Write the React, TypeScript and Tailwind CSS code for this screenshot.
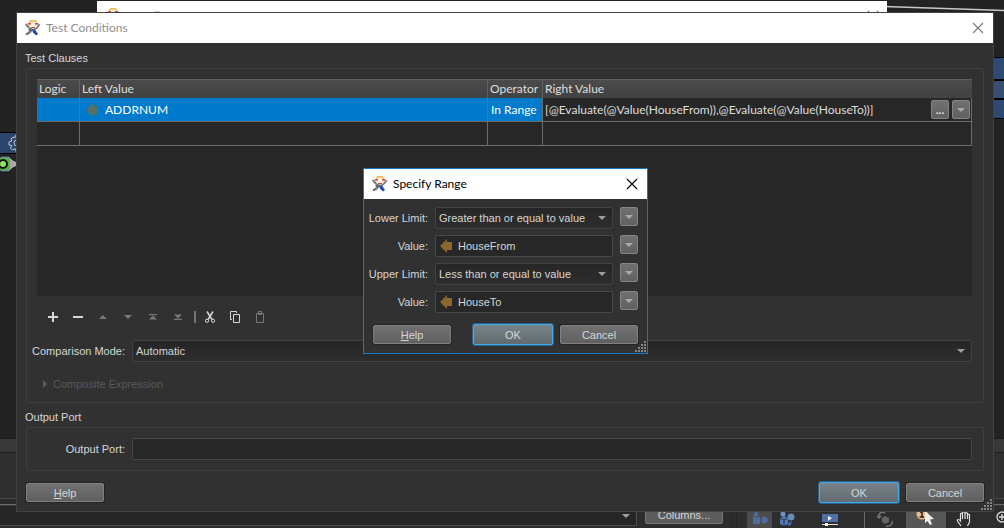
import type { ReactNode, SVGProps } from "react";

const tahoma = "font-['Liberation_Sans',Arial,sans-serif]";
const segoe = "font-[Lato,sans-serif]";

function Runner() {
  return (
    <svg className="size-4 shrink-0" viewBox="0 0 16 16" aria-hidden="true">
      <path d="M0 4L2 3.500L4.500 6L11 6L13.500 3.500L15.500 4.500L12.500 8.500L10 10.500L7.500 11L5 14L1 15.500L.500 13.500L3 12L5 9L2 7.500Z" fill="#94959a" />
      <path d="M.500 4.500L3 6.500L5.500 8M1 14.500L4.500 12M10.500 8.500L14.500 5.500" stroke="#55575d" fill="none" />
      <path d="M3 9L6 8L8 10L5 12Z" fill="#60636b" />
      <ellipse cx="8" cy="4.500" rx="4.800" ry="4" fill="#f8e3c8" />
      <path d="M4 2L6 .700H10L12 2" stroke="#efb53b" strokeWidth="1.200" fill="none" />
      <path d="M3 3.800H6M10 3.800H13" stroke="#d9432a" strokeWidth="1.500" />
      <path d="M6 3H10V7H6Z" fill="#fff6ef" />
      <path d="M6 7.500H10" stroke="#c9453a" />
      <path d="M7 9.500H10L13 14L11 15.500L8 12.500Z" fill="#1d4cae" />
    </svg>
  );
}

function Cross({ className }: { className: string }) {
  return (
    <svg className={`size-3 ${className}`} viewBox="0 0 12 12" fill="none" stroke="currentColor" aria-hidden="true">
      <path d="M1 1L11 11M11 1L1 11" strokeWidth="1.100" />
    </svg>
  );
}

function Down({ className }: { className: string }) {
  return (
    <svg className={`h-1 w-2 shrink-0 ${className}`} viewBox="0 0 8 4" fill="currentColor" aria-hidden="true">
      <path d="M0 0H8L4 4Z" />
    </svg>
  );
}

function LeftArrow({ className }: { className: string }) {
  return (
    <svg className={`h-[14px] w-3 shrink-0 ${className}`} viewBox="0 0 12 14" fill="currentColor" aria-hidden="true">
      <path d="M0 7L7 0V3H12V11H7V14Z" />
    </svg>
  );
}

function Grip() {
  const dots = [[9, 0], [6, 3], [9, 3], [3, 6], [6, 6], [9, 6], [0, 9], [3, 9], [6, 9], [9, 9]];
  return (
    <svg className="absolute right-px bottom-px h-[11px] w-[11px]" viewBox="0 0 11 11" fill="#858585" aria-hidden="true">
      {dots.map(([x, y]) => <rect key={`${x}-${y}`} x={x} y={y} width="2" height="2" />)}
    </svg>
  );
}

function PushButton({ children, primary }: { children: ReactNode; primary?: boolean }) {
  return (
    <button
      type="button"
      className={`flex items-center justify-center rounded-xs border bg-linear-to-b ${
        primary
          ? "h-[21px] w-20 border-[#43a9ed] from-[#78848a] to-[#626b6f] ring-1 ring-[#2a638b]"
          : "h-[19px] w-[78px] border-[#818181] from-[#717171] to-[#606060] ring-1 ring-[#242424]"
      }`}
    >
      {children}
    </button>
  );
}

function SmallButton({ label, children }: { label: string; children: ReactNode }) {
  return (
    <button
      type="button"
      aria-label={label}
      className="flex h-[19px] w-[18px] shrink-0 items-center justify-center rounded-xs border border-[#858585] bg-linear-to-b from-[#707070] to-[#616161]"
    >
      {children}
    </button>
  );
}

function Combo({ id, value }: { id: string; value: string }) {
  return (
    <div className="grid h-[22px] flex-1 items-center">
      <select
        id={id}
        className="col-start-1 row-start-1 h-[22px] w-full appearance-none rounded-xs border border-[#424242] bg-linear-to-b from-[#262626] to-[#2d2d2d] pl-[3px] outline-none"
      >
        <option>{value}</option>
      </select>
      <Down className="pointer-events-none col-start-1 row-start-1 mr-[7px] justify-self-end text-[#9b9b9b]" />
    </div>
  );
}

function TitleBar({ title, active }: { title: string; active?: boolean }) {
  return (
    <header className={`flex h-[30px] items-center bg-white pr-[9px] pl-2 text-xs ${segoe} ${active ? "text-black" : "text-[#8f8f8f]"}`}>
      <Runner />
      <h2 className="ml-[5px] flex-1">{title}</h2>
      <button type="button" aria-label={`Close ${title}`}><Cross className={active ? "text-black" : "text-[#777]"} /></button>
    </header>
  );
}

function Tool({ label, dim, children, ...rest }: { label: string; dim?: boolean; children: ReactNode } & SVGProps<SVGSVGElement>) {
  return (
    <button type="button" aria-label={label} disabled={dim} className={`flex h-5 w-[25px] items-center justify-center ${dim ? "text-[#777]" : "text-[#d6d6d6]"}`}>
      <svg className="size-3" viewBox="0 0 12 12" fill="none" stroke="currentColor" {...rest}>{children}</svg>
    </button>
  );
}

function Toolbar() {
  return (
    <div className="mt-[11px] ml-[3px] flex items-center">
      <Tool label="Add"><path d="M1 6H11M6 1V11" strokeWidth="2" /></Tool>
      <Tool label="Remove"><path d="M1 6H11" strokeWidth="2" /></Tool>
      <Tool label="Move up" dim><path d="M2 8L6 4L10 8Z" fill="currentColor" stroke="none" /></Tool>
      <Tool label="Move down" dim><path d="M2 4H10L6 8Z" fill="currentColor" stroke="none" /></Tool>
      <Tool label="Move to top" dim><path d="M2 3H10V4.200H2ZM6 4.500L10 8.500H2Z" fill="currentColor" stroke="none" /></Tool>
      <Tool label="Move to bottom" dim><path d="M2 7.800H10V9H2ZM2 3.500H10L6 7.500Z" fill="currentColor" stroke="none" /></Tool>
      <span className="mr-px ml-1 h-3 w-[2px] bg-[#737373]" />
      <Tool label="Cut">
        <path d="M3 .500L8 8.500M9 .500L4 8.500" strokeWidth="1.500" /><circle cx="3" cy="9.800" r="1.600" /><circle cx="9" cy="9.800" r="1.600" />
      </Tool>
      <Tool label="Copy"><path d="M4.500 3.500H10.500V11.500H4.500ZM3 8.500H1.500V.500H7.500V2" /></Tool>
      <Tool label="Paste" dim><path d="M2.500 2.500H9.500V11.500H2.500ZM4.500 3.500V.500H7.500V3.500Z" /></Tool>
    </div>
  );
}

const cell = "border-r border-b border-[#6b6b6b] p-0";
const head = "border-r border-[#606060] p-0 pl-[2px] font-normal";

function ClauseTable() {
  return (
    <div className="h-[217px] border-t border-[#606060] bg-[#272727]">
      <table className={`w-full table-fixed border-separate border-spacing-0 text-xs leading-4 text-[#dedede] ${segoe}`}>
        <colgroup><col className="w-[43px]" /><col /><col className="w-[55px]" /><col className="w-[429px]" /></colgroup>
        <thead>
          <tr className="h-[18px] bg-linear-to-b from-[#4b4b4b] to-[#424242] text-left">
            <th className={head}>Logic</th>
            <th className={head}>Left Value</th>
            <th className={head}>Operator</th>
            <th className="p-0 pl-[2px] font-normal">Right Value</th>
          </tr>
        </thead>
        <tbody>
          <tr className="h-6">
            <td className={`${cell} bg-[#007acc]`} />
            <td className={`${cell} bg-[#007acc] text-white`}>
              <span className="flex items-center gap-[7px] pl-[6px]"><LeftArrow className="text-[#58705f]" />ADDRNUM</span>
            </td>
            <td className={`${cell} bg-[#007acc] text-white`}><span className="pl-[3px] whitespace-nowrap">In Range</span></td>
            <td className={cell}>
              <span className="flex items-center pl-[2px]">
                <span className="flex-1 whitespace-nowrap">[@Evaluate(@Value(HouseFrom)),@Evaluate(@Value(HouseTo))]</span>
                <span className="flex gap-[3px] pr-[1px]">
                  <SmallButton label="Edit value"><span className="leading-3 font-bold">...</span></SmallButton>
                  <SmallButton label="Value options"><Down className="text-[#aaa]" /></SmallButton>
                </span>
              </span>
            </td>
          </tr>
          <tr className="h-6"><td className={cell} /><td className={cell} /><td className={cell} /><td className={cell} /></tr>
        </tbody>
      </table>
    </div>
  );
}

function TestConditions() {
  return (
    <section className="absolute top-3 right-[10px] left-4 border border-[#424242] bg-[#313131]">
      <TitleBar title="Test Conditions" />
      <div className="px-[9px] pt-[7px] pb-2">
        <h3 className="-ml-px h-[18px] leading-4">Test Clauses</h3>
        <div className="h-[335px] rounded-xs border border-[#3e3e3e] pt-[10px] pr-[11px] pl-[10px]">
          <ClauseTable />
          <Toolbar />
          <div className="mt-[13px] flex items-center">
            <label htmlFor="mode" className="flex w-[95px] justify-end pr-[7px] whitespace-nowrap">Comparison Mode:</label>
            <Combo id="mode" value="Automatic" />
          </div>
          <button type="button" disabled className="mt-[14px] ml-[6px] flex items-center gap-[6px] text-[#5a5a5a]">
            <svg className="h-2 w-1" viewBox="0 0 4 8" fill="currentColor" aria-hidden="true"><path d="M0 0L4 4L0 8Z" /></svg>
            Composite Expression
          </button>
        </div>
        <h3 className="mt-[6px] -ml-px h-[18px] leading-4">Output Port</h3>
        <div className="flex h-11 items-center rounded-xs border border-[#3e3e3e] pr-[11px] pl-[10px]">
          <label htmlFor="port" className="flex w-[95px] justify-end pr-[7px] whitespace-nowrap">Output Port:</label>
          <input id="port" className="h-[22px] min-w-0 flex-1 rounded-xs border border-[#484848] bg-[#272727] px-1 outline-none" />
        </div>
        <footer className="mt-[11px] flex items-center">
          <PushButton><span><u>H</u>elp</span></PushButton>
          <span className="flex-1" />
          <div className="flex items-center gap-[7px]"><PushButton primary>OK</PushButton><PushButton>Cancel</PushButton></div>
        </footer>
      </div>
      <Grip />
    </section>
  );
}

function ValueField({ id, value }: { id: string; value: string }) {
  return (
    <div className="flex h-[22px] flex-1 items-center gap-[6px] rounded-xs border border-[#484848] bg-[#272727] pl-1">
      <LeftArrow className="text-[#8a672e]" />
      <input id={id} defaultValue={value} className="w-0 flex-1 bg-transparent outline-none" />
    </div>
  );
}

const limits = [
  { id: "lower", label: "Lower Limit:", value: "Greater than or equal to value", combo: true },
  { id: "lower-value", label: "Value:", value: "HouseFrom", combo: false },
  { id: "upper", label: "Upper Limit:", value: "Less than or equal to value", combo: true },
  { id: "upper-value", label: "Value:", value: "HouseTo", combo: false },
];

function SpecifyRange() {
  return (
    <section className="absolute top-[168px] left-[363px] w-[285px] border border-[#1479c9] bg-[#313131]">
      <TitleBar title="Specify Range" active />
      <div className="px-[9px] pt-2 pb-2">
        <div className="flex flex-col gap-[6px]">
          {limits.map(({ id, label, value, combo }) => (
            <div key={id} className="flex items-start">
              <label htmlFor={id} className="flex w-[62px] justify-end self-center pr-[7px] whitespace-nowrap">{label}</label>
              {combo ? <Combo id={id} value={value} /> : <ValueField id={id} value={value} />}
              <span className="w-[7px]" />
              <SmallButton label={`${label} options`}><Down className="text-[#aaa]" /></SmallButton>
            </div>
          ))}
        </div>
        <footer className="mt-[11px] flex items-center">
          <PushButton><span><u>H</u>elp</span></PushButton>
          <span className="flex-1" />
          <div className="flex items-center gap-[7px]"><PushButton primary>OK</PushButton><PushButton>Cancel</PushButton></div>
        </footer>
      </div>
      <Grip />
    </section>
  );
}

function Canvas() {
  return (
    <div className="relative h-[438px] overflow-hidden">
      <svg className="absolute top-0 right-0 h-3 w-[120px]" viewBox="0 0 120 12" fill="none" stroke="#c8c8c8" aria-hidden="true">
        <path d="M0 6.500L120 10.500" strokeWidth="1.300" />
      </svg>
      <div className="absolute top-px right-[117px] left-[97px] h-10 bg-white px-2 pt-[7px]">
        <div className={`flex items-center text-xs leading-4 text-[#999] ${segoe}`}>
          <Runner />
          <h2 className="ml-[5px] flex-1">TestFilter Parameters</h2>
          <Cross className="text-[#777]" />
        </div>
      </div>
      <div className="absolute top-[132px] left-0 h-[22px] w-5 border-y border-black bg-[#2c456b]">
        <svg className="absolute top-0 left-2 size-5" viewBox="0 0 20 20" fill="none" stroke="#b9c4d6" aria-hidden="true">
          <circle cx="9" cy="10" r="3" />
          <path d="M7.500 2.500H10.500L11 5L13 4L15 6L14 8L17 9V12L14 12.500L15 15L13 17L11 15.500L10.500 18H7.500L7 15.500L4.500 17L2.500 15L4 12.500L1 12V9L4 8L3 6L5 4L7 5Z" />
        </svg>
      </div>
      <svg className="absolute top-[155px] left-0 h-[18px] w-4" viewBox="0 0 16 18" aria-hidden="true">
        <path d="M0 1H9L13 5V13L9 17H0Z" fill="#7288a8" stroke="#111" />
        <path d="M0 3H8L10 5.500V12.500L8 15H0Z" fill="#55b82e" />
        <circle cx="3" cy="9" r="4" fill="#8ee26a" stroke="#111" strokeWidth="2" />
        <path d="M10 4L16 7V11L10 14Z" fill="#a9a9a9" />
      </svg>
      <div className="absolute top-[57px] right-0 flex w-[10px] flex-col gap-[2px] border-y border-black bg-black">
        <span className="h-[21px] bg-[#2e4a75]" /><span className="h-[17px] bg-[#384e72]" /><span className="h-[18px] bg-[#2f4a72]" />
      </div>
    </div>
  );
}

function StatusTools() {
  return (
    <div className="flex h-[23px] items-start overflow-hidden border-t border-[#3a3a3a] bg-[#2d2d2d]">
      <div className="flex h-5 flex-1 items-center justify-end rounded-xs border-r border-b border-[#505050] bg-[#262626] pr-[6px]">
        <Down className="text-[#a0a0a0]" />
      </div>
      <button type="button" className="ml-2 flex h-[18px] w-[78px] items-center justify-center rounded-xs border border-[#777] bg-[#5d5d5d]">Columns...</button>
      <span className="mr-[10px] ml-2 h-6 w-[6px] border-x border-[#242424]" />
      <button type="button" aria-label="Shapes" className="flex h-6 w-[25px] justify-center bg-[#4c4c4c]">
        <svg className="mt-1 h-4 w-4" viewBox="0 0 16 16" fill="#4d6da0"><path d="M4 0L7 6H1ZM1 7H8V14H1Z" /><circle cx="12.500" cy="10" r="3.200" /></svg>
      </button>
      <button type="button" aria-label="Objects" className="ml-[7px] h-6 w-5">
        <svg className="mt-1 h-4 w-4" viewBox="0 0 16 16"><path d="M1 6L5 4L9 6V12L5 14L1 12Z" fill="#527bb6" /><path d="M1 6L5 8L9 6M5 8V14" stroke="#24364f" fill="none" /><circle cx="4" cy="2" r="2.500" fill="#6f92c3" /><circle cx="12" cy="5" r="3.500" fill="#688abb" /><path d="M9 11L13 9L12 13L9 14Z" fill="#3d67a3" /></svg>
      </button>
      <button type="button" aria-label="Play" className="ml-[23px] h-6 w-4">
        <svg className="mt-[7px] h-4 w-4" viewBox="0 0 16 16"><path d="M0 0H16V8H0Z" fill="#4e70a8" /><path d="M6 2L10 4L6 7Z" fill="#eee" /><path d="M0 10.500H16" stroke="#ddd" /><path d="M3 9H6V12H3Z" fill="#eee" /></svg>
      </button>
      <span className="ml-[26px] h-6 w-px bg-[#686868]" />
      <button type="button" aria-label="Orbit" className="ml-3 h-6 w-[18px]">
        <svg className="mt-1 size-4" viewBox="0 0 16 16" fill="none" stroke="#777" strokeWidth="1.500"><path d="M5 6L8 4L12 6V10L8 12L5 10Z" fill="#646464" stroke="none" /><path d="M8 1C4-1 1 2 2 5M0 4L2 6L4 4M9 14C13 15 16 12 15 9" /></svg>
      </button>
      <button type="button" aria-label="Identify" className="ml-[11px] flex h-6 w-10 justify-center bg-[#575757]">
        <svg className="mt-[3px] h-4 w-5" viewBox="0 0 20 16"><circle cx="6" cy="5" r="5.500" fill="#e8bd87" /><path d="M4 3H6V8M3.500 8H8" stroke="#222" strokeWidth="1.500" fill="none" /><path d="M9 2L18 10L14 10.500L16 15L14 16L11.500 12L9 14Z" fill="#eee" /></svg>
      </button>
      <button type="button" aria-label="Pan" className="ml-[10px] h-6 w-[18px]">
        <svg className="mt-[2px] h-4 w-4" viewBox="0 0 16 16" fill="none" stroke="#e0e0e0" strokeWidth="1.200"><path d="M5 15L1.500 10C1 8 3 8 4.500 10V3C4.500 2 6.500 2 6.500 3V8V1.500C6.500 .500 9 .500 9 1.500V8V2.500C9 1.500 11.500 1.500 11.500 2.500V8V4C11.500 3 13.500 3 13.500 4V11L11.500 15" /></svg>
      </button>
      <button type="button" aria-label="Zoom in" className="ml-[22px] h-6 w-2 overflow-hidden">
        <svg className="mt-[2px] h-4 w-4" viewBox="0 0 16 16" fill="none" stroke="#ddd" strokeWidth="1.300"><circle cx="6" cy="6" r="5" /><path d="M3 6H9M6 3V9M10 10L14 14" /></svg>
      </button>
    </div>
  );
}

export default function App() {
  return (
    <main className={`relative flex min-h-screen flex-col overflow-hidden bg-[#232323] text-[11px] leading-4 text-[#d6d6d6] ${tahoma}`}>
      <Canvas />
      <div className="h-[15px] border-y border-[#1d1d1d] bg-[#383838]" />
      <div className="h-[46px] border-b border-[#484848] bg-[#303030]" />
      <div className="h-[6px] border-b border-[#696969] bg-[#2b2b2b]" />
      <StatusTools />
      <TestConditions />
      <SpecifyRange />
    </main>
  );
}
